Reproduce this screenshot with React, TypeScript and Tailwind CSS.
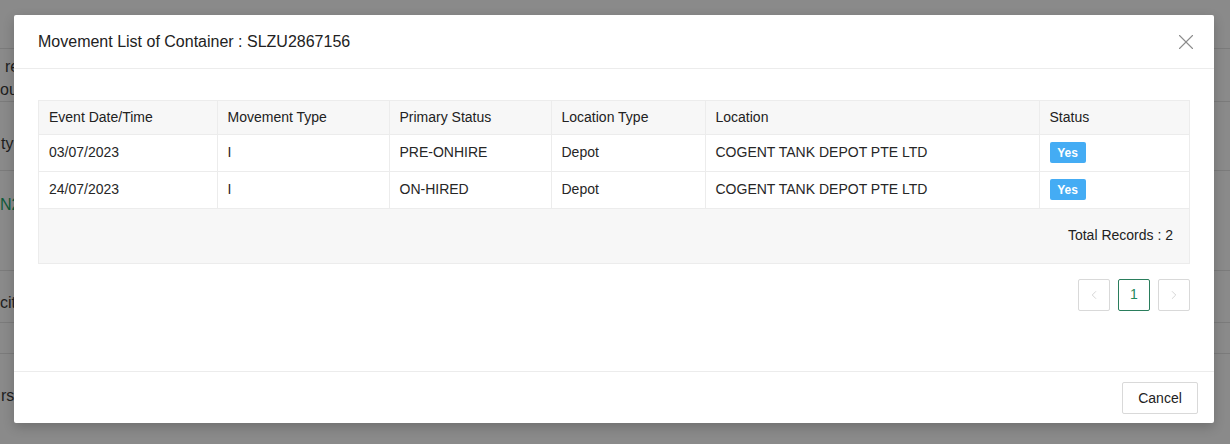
import React from 'react';
import { X, ChevronLeft, ChevronRight } from 'lucide-react';

interface Movement {
  date: string;
  type: string;
  primaryStatus: string;
  locationType: string;
  location: string;
  active: boolean;
}

const movements: Movement[] = [
  { date: '03/07/2023', type: 'I', primaryStatus: 'PRE-ONHIRE', locationType: 'Depot', location: 'COGENT TANK DEPOT PTE LTD', active: true },
  { date: '24/07/2023', type: 'I', primaryStatus: 'ON-HIRED', locationType: 'Depot', location: 'COGENT TANK DEPOT PTE LTD', active: true },
];

const headers = ['Event Date/Time', 'Movement Type', 'Primary Status', 'Location Type', 'Location', 'Status'];

const App: React.FC = () => {
  return (
    <div
      className="relative w-[1230px] h-[444px] overflow-hidden bg-[#8a8a8a] text-[#262626]"
      style={{ fontFamily: '"Liberation Sans", Arial, sans-serif' }}
    >
      {/* dimmed page behind the modal */}
      <div className="flex flex-col text-[16px] text-[#1e1e1e]">
        <div className="h-[48px]" />
        <div className="h-[53px] border-t border-[#7b7b7b] flex flex-col pt-[6px] leading-[23px]">
          <span className="ml-[5px]">re</span>
          <span className="ml-0">ou</span>
        </div>
        <div className="h-[69px] border-t border-[#7b7b7b] pt-[30px]">
          <span className="ml-[1px]">ty</span>
        </div>
        <div className="h-[100px] border-t border-[#7b7b7b] pt-[22px]">
          <span className="ml-0 text-[#0f5a3a]">N2</span>
        </div>
        <div className="h-[52px] border-t border-[#7b7b7b] flex items-center pt-[12px]">
          <span className="ml-0">cit</span>
        </div>
        <div className="h-[31px] border-t border-[#7b7b7b]" />
        <div className="h-[91px] border-t border-[#7b7b7b] pt-[30px]">
          <span className="ml-[1px]">rs</span>
        </div>
      </div>

      {/* modal */}
      <div className="absolute left-[14px] top-[15px] w-[1200px] h-[408px] bg-white rounded-[2px] shadow-[0_4px_12px_rgba(0,0,0,0.2)] flex flex-col">
        <div className="h-[54px] flex items-center justify-between px-[24px] border-b border-[#ececec]">
          <h2 className="text-[16px] text-[#222]">Movement List of Container : SLZU2867156</h2>
          <X size={26} strokeWidth={1} className="text-[#8c8c8c] mr-[-9px]" />
        </div>

        <div className="flex-1 px-[24px] pt-[31px]">
          <div className="border border-[#ececec]">
            <table className="table-fixed w-[1150px] border-collapse text-[14px]">
              <colgroup>
                <col className="w-[178px]" />
                <col className="w-[172px]" />
                <col className="w-[162px]" />
                <col className="w-[154px]" />
                <col className="w-[334px]" />
                <col className="w-[150px]" />
              </colgroup>
              <thead>
                <tr className="bg-[#f7f7f7] h-[33px]">
                  {headers.map((h, i) => (
                    <th
                      key={h}
                      className={`text-left font-normal px-[10px] text-[#222] border-b border-[#ececec] ${i < headers.length - 1 ? 'border-r' : ''}`}
                    >
                      {h}
                    </th>
                  ))}
                </tr>
              </thead>
              <tbody>
                {movements.map((m) => (
                  <tr key={m.date} className="h-[37px]">
                    <td className="px-[10px] border-b border-r border-[#ececec]">{m.date}</td>
                    <td className="px-[10px] border-b border-r border-[#ececec]">{m.type}</td>
                    <td className="px-[10px] border-b border-r border-[#ececec]">{m.primaryStatus}</td>
                    <td className="px-[10px] border-b border-r border-[#ececec]">{m.locationType}</td>
                    <td className="px-[10px] border-b border-r border-[#ececec]">{m.location}</td>
                    <td className="px-[10px] border-b border-[#ececec]">
                      {m.active && (
                        <span className="inline-flex items-center justify-center w-[36px] h-[21px] rounded-[2px] bg-[#44acf4] text-white text-[12px] font-bold">
                          Yes
                        </span>
                      )}
                    </td>
                  </tr>
                ))}
              </tbody>
            </table>
            <div className="h-[54px] bg-[#f7f7f7] flex items-center justify-end pr-[16px] text-[14px] text-[#222]">
              Total Records : 2
            </div>
          </div>

          <div className="flex justify-end gap-[8px] mt-[15px]">
            <button className="w-[32px] h-[32px] border border-[#d9d9d9] rounded-[2px] flex items-center justify-center text-[#c4c4c4]">
              <ChevronLeft size={14} strokeWidth={1.2} />
            </button>
            <button className="w-[32px] h-[32px] border border-[#2a7d5c] rounded-[2px] flex items-center justify-center text-[14px] text-[#1f8a5e]">
              1
            </button>
            <button className="w-[32px] h-[32px] border border-[#d9d9d9] rounded-[2px] flex items-center justify-center text-[#c4c4c4]">
              <ChevronRight size={14} strokeWidth={1.2} />
            </button>
          </div>
        </div>

        <div className="h-[52px] border-t border-[#ececec] flex items-center justify-end pr-[16px] pt-[1px]">
          <button className="w-[76px] h-[32px] border border-[#d9d9d9] rounded-[2px] text-[14px] text-[#222] bg-white">
            Cancel
          </button>
        </div>
      </div>
    </div>
  );
};

export default App;
